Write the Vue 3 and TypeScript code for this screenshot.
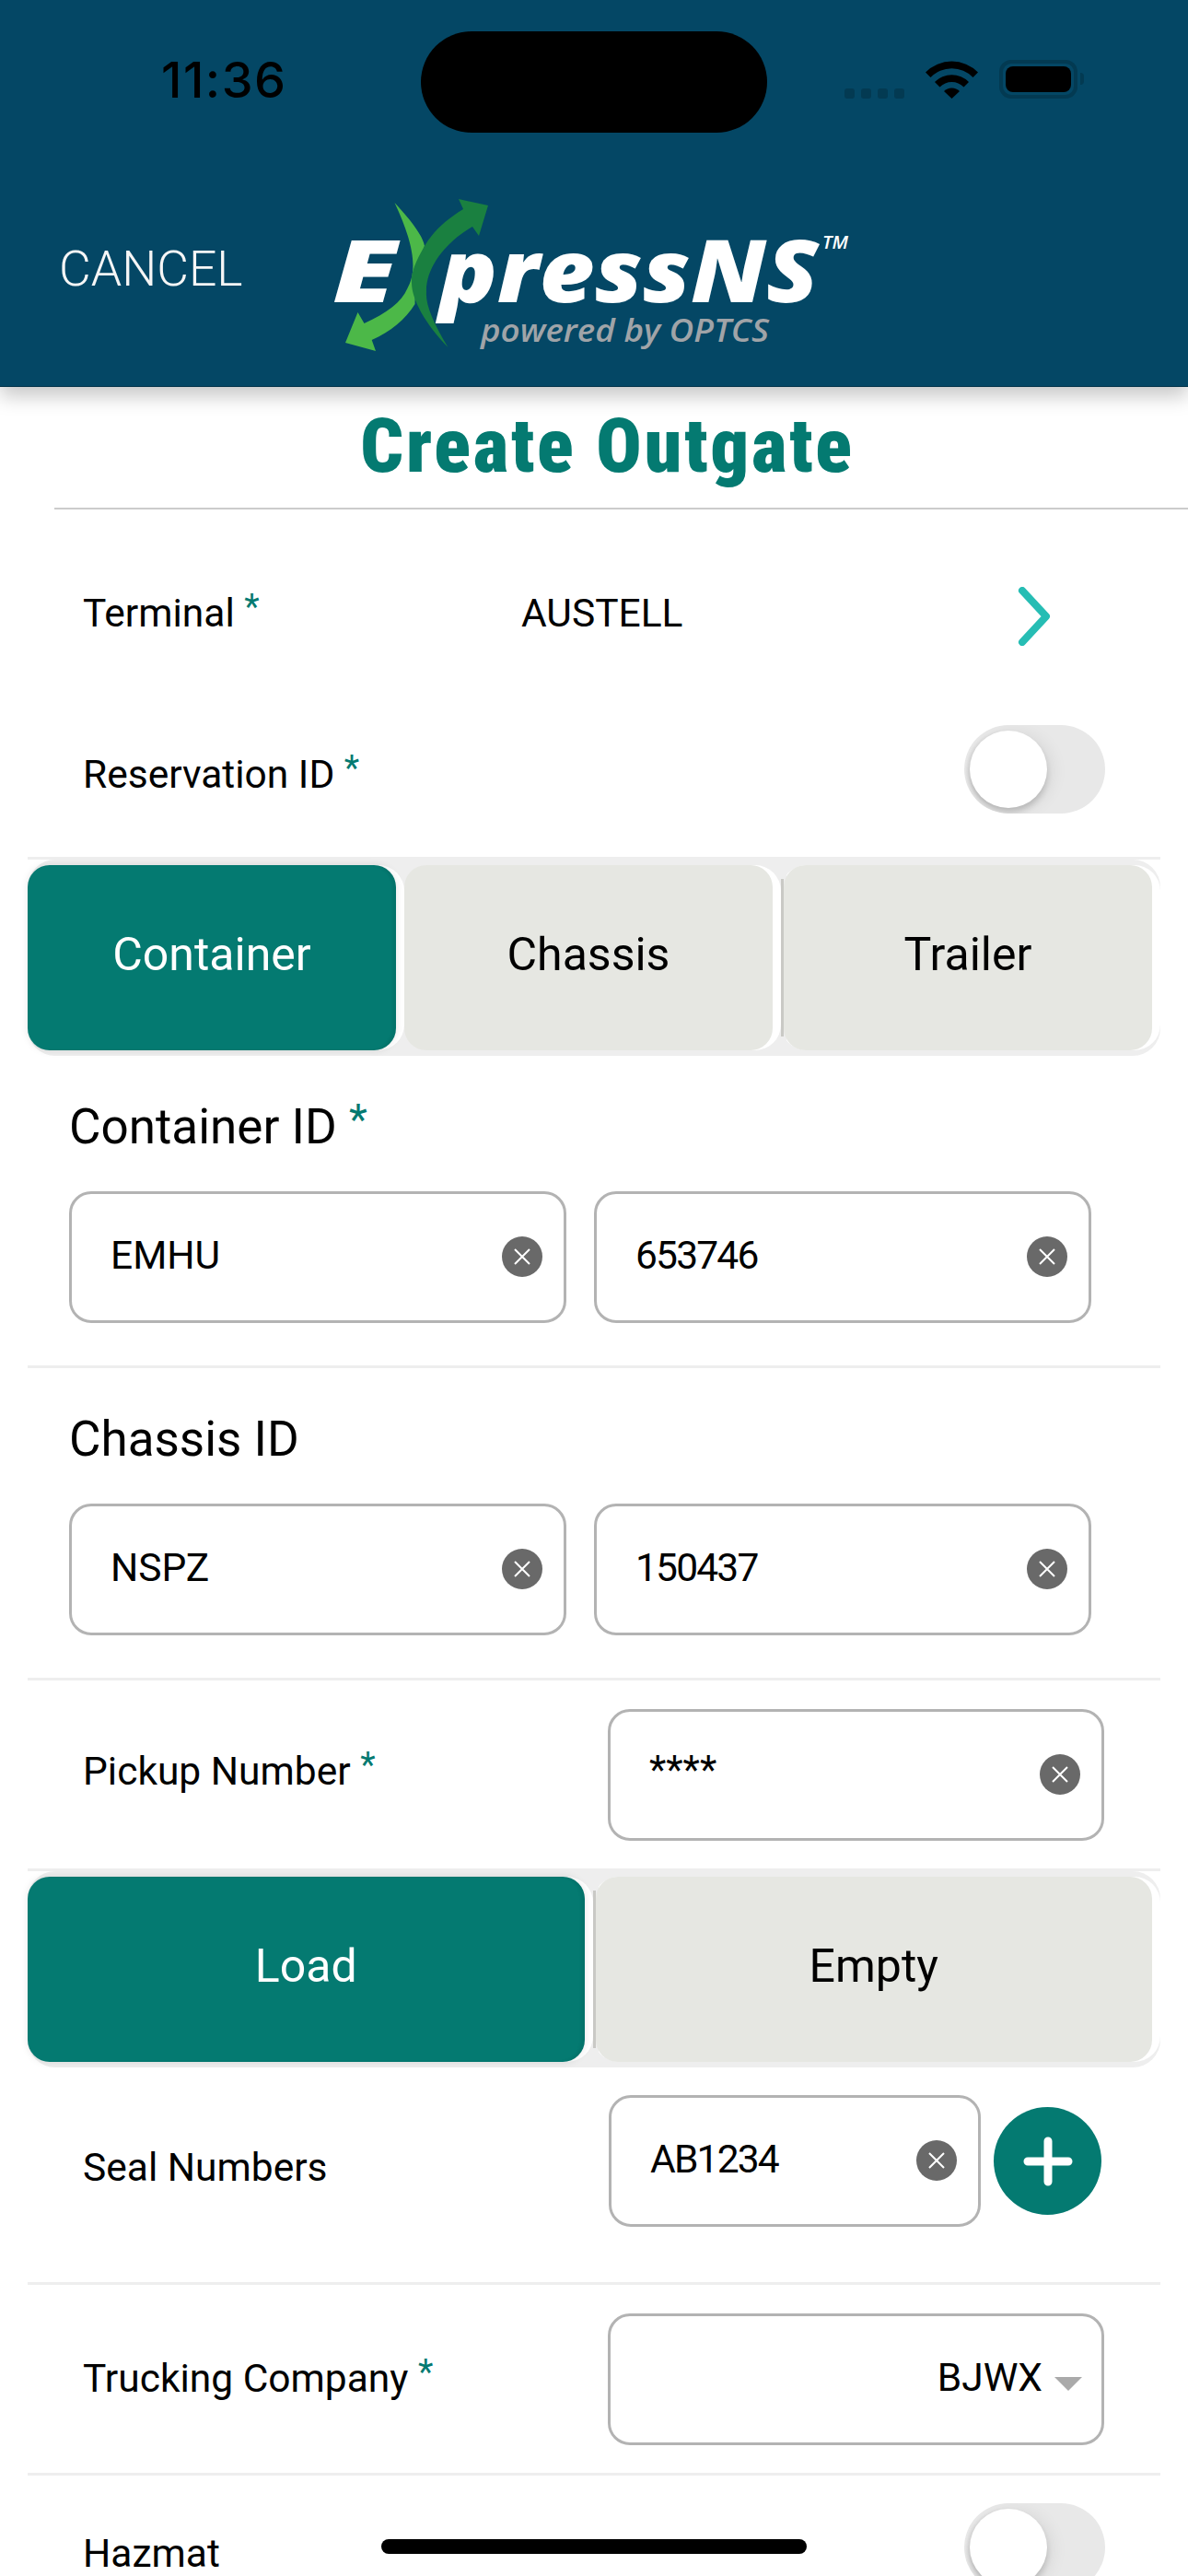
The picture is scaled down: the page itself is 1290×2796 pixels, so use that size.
<script setup lang="ts">
interface IdBlock { title: string; required: boolean; prefix: string; num: string }
const idBlocks: IdBlock[] = [
  { title: 'Container ID', required: true, prefix: 'EMHU', num: '653746' },
  { title: 'Chassis ID', required: false, prefix: 'NSPZ', num: '150437' },
]
</script>

<template>
  <div class="screen">
    <header class="header">
      <div class="status">
        <span class="time">11:36</span>
        <div class="status-right">
          <div class="dots"><i></i><i></i><i></i><i></i></div>
          <svg class="wifi" width="57" height="42" viewBox="0 0 57 42">
            <path d="M0 13.500 A40 40 0 0 1 57 13.500 L51.500 19 A32 32 0 0 0 5.500 19Z" fill="#000"/>
            <path d="M10 24 A26 26 0 0 1 47 24 L41.500 29.500 A18 18 0 0 0 15.500 29.500Z" fill="#000"/>
            <path d="M20 34 A12 12 0 0 1 37 34 L28.500 42Z" fill="#000"/>
          </svg>
          <div class="battery"><div class="battery-fill"></div></div>
          <div class="battery-cap"></div>
        </div>
      </div>
      <div class="island"></div>
      <div class="nav">
        <span class="cancel">CANCEL</span>
        <svg class="logo" width="570" height="170" viewBox="360 214 570 170">
          <path d="M428.500 220 C447 240 459 256 461 267 C451 290 451 315 450.600 330 C440 347 424 360 403.700 369 L408 381 L375 372 L388.500 339 L395.500 351 C420 340 436 328 442.400 313 C452 296 452 270 428.500 220Z" fill="#4cb848"/>
          <path d="M530 223 L498 216 L503 227 C482 240 470 252 461 267 C450 286 446 298 447 307 C447 325 462 352 486.500 377 C470 350 462 330 463 317 C462 290 485 262 513 246 L520 256Z" fill="#1a8040"/>
          <text x="361" y="328" class="logo-big" textLength="70" lengthAdjust="spacingAndGlyphs">E</text>
          <text x="477" y="328" class="logo-big" textLength="412" lengthAdjust="spacingAndGlyphs">pressNS</text>
          <text x="893" y="270" class="logo-tm" textLength="28" lengthAdjust="spacingAndGlyphs">TM</text>
          <text x="522" y="371" class="logo-sub" textLength="313" lengthAdjust="spacingAndGlyphs">powered by OPTCS</text>
        </svg>
      </div>
    </header>

    <div class="title">Create Outgate</div>

    <div class="row row-terminal">
      <span class="label">Terminal <em>*</em></span>
      <span class="value">AUSTELL</span>
      <svg class="chev" width="36" height="64" viewBox="0 0 36 64"><path d="M5 4 L31 32 L5 60" fill="none" stroke="#26bdb4" stroke-width="8" stroke-linecap="round" stroke-linejoin="round"/></svg>
    </div>

    <div class="row row-res">
      <span class="label">Reservation ID <em>*</em></span>
      <div class="toggle"><div class="knob"></div></div>
    </div>

    <div class="seg-wrap">
      <div class="segment">
        <div class="cell"><div class="seg-btn on">Container</div></div>
        <div class="cell"><div class="seg-btn">Chassis</div></div>
        <div class="cell sep"><div class="seg-btn">Trailer</div></div>
      </div>
    </div>

    <section v-for="b in idBlocks" :key="b.title" class="id-block">
      <div class="id-title">{{ b.title }} <em v-if="b.required">*</em></div>
      <div class="id-inputs">
        <div class="field"><span>{{ b.prefix }}</span><b class="x"><svg width="44" height="44" viewBox="0 0 44 44"><path d="M14 14 L30 30 M30 14 L14 30" stroke="#fff" stroke-width="2"/></svg></b></div>
        <div class="field"><span class="num">{{ b.num }}</span><b class="x"><svg width="44" height="44" viewBox="0 0 44 44"><path d="M14 14 L30 30 M30 14 L14 30" stroke="#fff" stroke-width="2"/></svg></b></div>
      </div>
    </section>

    <div class="row row-field pickup">
      <span class="label">Pickup Number <em>*</em></span>
      <div class="field wide"><span class="mask">****</span><b class="x"><svg width="44" height="44" viewBox="0 0 44 44"><path d="M14 14 L30 30 M30 14 L14 30" stroke="#fff" stroke-width="2"/></svg></b></div>
    </div>

    <div class="seg-wrap">
      <div class="segment">
        <div class="cell"><div class="seg-btn on">Load</div></div>
        <div class="cell sep"><div class="seg-btn">Empty</div></div>
      </div>
    </div>

    <div class="row row-field seal">
      <span class="label">Seal Numbers</span>
      <div class="seal-right">
        <div class="field narrow"><span class="num">AB1234</span><b class="x"><svg width="44" height="44" viewBox="0 0 44 44"><path d="M14 14 L30 30 M30 14 L14 30" stroke="#fff" stroke-width="2"/></svg></b></div>
        <div class="plus"><svg width="54" height="54" viewBox="0 0 54 54"><path d="M5 27 H49 M27 5 V49" stroke="#fff" stroke-width="9" stroke-linecap="round"/></svg></div>
      </div>
    </div>

    <div class="row row-field trucking">
      <span class="label">Trucking Company <em>*</em></span>
      <div class="field wide select"><span>BJWX</span><i class="caret"></i></div>
    </div>

    <div class="row row-hazmat">
      <span class="label">Hazmat</span>
      <div class="toggle"><div class="knob"></div></div>
    </div>

    <div class="home"></div>
  </div>
</template>

<style>
html, body { margin: 0; background: #fff; }
</style>

<style scoped>
.screen {
  position: relative;
  width: 1290px;
  height: 2796px;
  overflow: hidden;
  background: #fff;
  font-family: Roboto, "Noto Sans", sans-serif;
  color: #000;
}
em { font-style: normal; color: #047a71; line-height: 0; }

.header {
  position: relative;
  z-index: 2;
  height: 420px;
  background: #044765;
  box-shadow: 0 10px 20px rgba(0,0,0,.22);
  border-bottom: 1px solid #03344a;
  box-sizing: border-box;
}
.status {
  display: flex;
  justify-content: space-between;
  height: 120px;
  padding: 0 113px 0 175px;
  align-items: flex-start;
}
.time {
  font-family: Inter, sans-serif;
  font-weight: 500;
  font-size: 54px;
  line-height: 56px;
  margin-top: 59px;
  letter-spacing: 1.500px;
}
.status-right {
  display: flex;
  align-items: flex-end;
  margin-top: 65px;
  height: 42px;
}
.dots { display: flex; gap: 7px; margin-right: 23px; }
.dots i { width: 11px; height: 11px; border-radius: 3px; background: #033a52; display: block; }
.wifi { margin-right: 23px; }
.battery {
  box-sizing: border-box;
  width: 85px;
  height: 42px;
  border: 4px solid #033a52;
  border-radius: 13px;
  padding: 3px;
}
.battery-fill { width: 100%; height: 100%; background: #000; border-radius: 8px; }
.battery-cap { width: 4px; height: 13px; background: #033a52; border-radius: 0 7px 7px 0; margin: 0 0 15px 3px; }
.island {
  position: absolute;
  left: 457px;
  top: 34px;
  width: 376px;
  height: 110px;
  border-radius: 55px;
  background: #000;
}
.nav { position: relative; height: 300px; }
.cancel {
  position: absolute;
  left: 64px;
  top: 142px;
  font-family: Roboto, sans-serif;
  font-weight: 300;
  font-size: 53.500px;
  line-height: 60px;
  color: #f6f6f6;
}
.logo { position: absolute; left: 360px; top: 94px; }
.logo-big { font-family: "Open Sans", sans-serif; font-weight: 800; font-style: italic; font-size: 94px; fill: #fff; }
.logo-tm { font-family: "Open Sans", sans-serif; font-style: italic; font-weight: 600; font-size: 19px; fill: #fff; }
.logo-sub { font-family: "Open Sans", sans-serif; font-style: italic; font-weight: 600; font-size: 34px; fill: #a0a4a8; }

.title {
  box-sizing: border-box;
  height: 133px;
  margin-left: 59px;
  border-bottom: 2px solid #ccc;
  text-align: center;
  padding-right: 30px;
  font-family: Roboto, sans-serif;
  font-weight: 900;
  font-stretch: 85%;
  font-size: 82px;
  letter-spacing: 2.800px;
  line-height: 128px;
  color: #047a71;
}

.row { display: flex; align-items: center; box-sizing: border-box; padding-left: 90px; }
.label { font-size: 42.500px; line-height: 52px; }
.label em { font-size: 38px; vertical-align: 8px; }
.row-terminal { height: 224px; }
.row-terminal .label { width: 476px; margin-top: 1px; }
.value { font-size: 42.500px; line-height: 52px; width: 539px; margin-top: 1px; }
.chev { margin-top: 8px; }
.row-res { height: 153px; justify-content: space-between; padding-right: 90px; padding-bottom: 38px; }
.row-res .label { margin-top: 13px; }
.toggle {
  position: relative;
  width: 153px;
  height: 96px;
  border-radius: 48px;
  background: #e8e8e8;
  overflow: hidden;
  flex: none;
}
.knob {
  position: absolute;
  left: 6px;
  top: 6px;
  width: 84px;
  height: 84px;
  border-radius: 50%;
  background: #fff;
  box-shadow: 0 5px 6px rgba(0,0,0,.16), 6px 2px 18px rgba(0,0,0,.07), -3px 0 3px rgba(0,0,0,.04);
}

.seg-wrap {
  box-sizing: border-box;
  height: 216px;
  margin: 0 30px;
  border-top: 3px solid #eee;
}
.segment {
  display: flex;
  height: 213px;
  box-sizing: border-box;
  background: #eee;
  border-radius: 30px;
  padding: 6px 0;
}
.cell {
  position: relative;
  flex: 1;
  display: flex;
  background: #fff;
  border-radius: 28px;
  padding-right: 9px;
}
.cell.sep { background: linear-gradient(to right, #eee 6px, #fff 6px); padding-left: 3px; }
.cell.sep::before {
  content: "";
  position: absolute;
  left: 0;
  top: 15px;
  bottom: 15px;
  width: 3px;
  background: #c9c9c5;
}
.seg-btn {
  flex: 1;
  box-sizing: border-box;
  display: flex;
  align-items: center;
  justify-content: center;
  background: #e6e7e2;
  border-radius: 24px;
  font-size: 50px;
  padding-bottom: 7px;
}
.seg-btn.on {
  background: #047a71;
  color: #fff;
  box-shadow: 0 0 8px rgba(0,0,0,.1), inset -4px 0 3px rgba(0,0,0,.06);
}

.id-block { box-sizing: border-box; height: 339px; border-bottom: 3px solid #eee; margin: 0 30px; padding: 47px 45px 0; }
.id-title { font-size: 53px; line-height: 60px; }
.id-title em { font-size: 46px; vertical-align: 10px; }
.id-inputs { display: flex; gap: 30px; margin-top: 40px; }
.id-inputs .field { width: 540px; }
.field {
  position: relative;
  box-sizing: border-box;
  width: 539px;
  height: 143px;
  border: 3px solid #b3b3b3;
  border-radius: 24px;
  background: #fff;
  font-size: 42.500px;
  line-height: 52px;
  padding: 41px 0 0 42px;
  flex: none;
}
.num { letter-spacing: -1.800px; }
.x {
  position: absolute;
  right: 23px;
  top: 46px;
  width: 44px;
  height: 44px;
  border-radius: 50%;
  background: #696969;
  display: block;
}
.x svg { display: block; }
.row-field { justify-content: space-between; }
.pickup { height: 204px; padding-right: 91px; }
.pickup .label { margin-bottom: 6px; }
.seal { height: 236px; border-bottom: 3px solid #eee; margin: 0 30px; padding: 30px 64px 0 60px; align-items: flex-start; }
.seal .label { margin-top: 53px; }
.trucking { height: 207px; border-bottom: 3px solid #eee; margin: 0 30px; padding: 0 61px 0 60px; }
.wide { width: 539px; }
.narrow { width: 404px; }
.mask { display: block; margin-top: -4px; }
.seal-right { display: flex; align-items: center; gap: 14px; }
.plus {
  width: 117px;
  height: 117px;
  border-radius: 50%;
  background: #047a71;
  display: flex;
  align-items: center;
  justify-content: center;
}
.select { display: flex; justify-content: flex-end; align-items: flex-start; padding: 41px 21px 0 0; gap: 13px; }
.caret {
  width: 0; height: 0; margin-top: 25px;
  border-left: 15px solid transparent;
  border-right: 15px solid transparent;
  border-top: 15px solid #aaa;
}
.row-hazmat { height: 109px; align-items: flex-start; justify-content: space-between; padding-right: 90px; padding-top: 30px; overflow: hidden; }
.row-hazmat .label { margin-top: 33px; line-height: 44px; }
.home {
  position: absolute;
  left: 414px;
  top: 2756px;
  width: 462px;
  height: 16px;
  border-radius: 8px;
  background: #000;
}
</style>
